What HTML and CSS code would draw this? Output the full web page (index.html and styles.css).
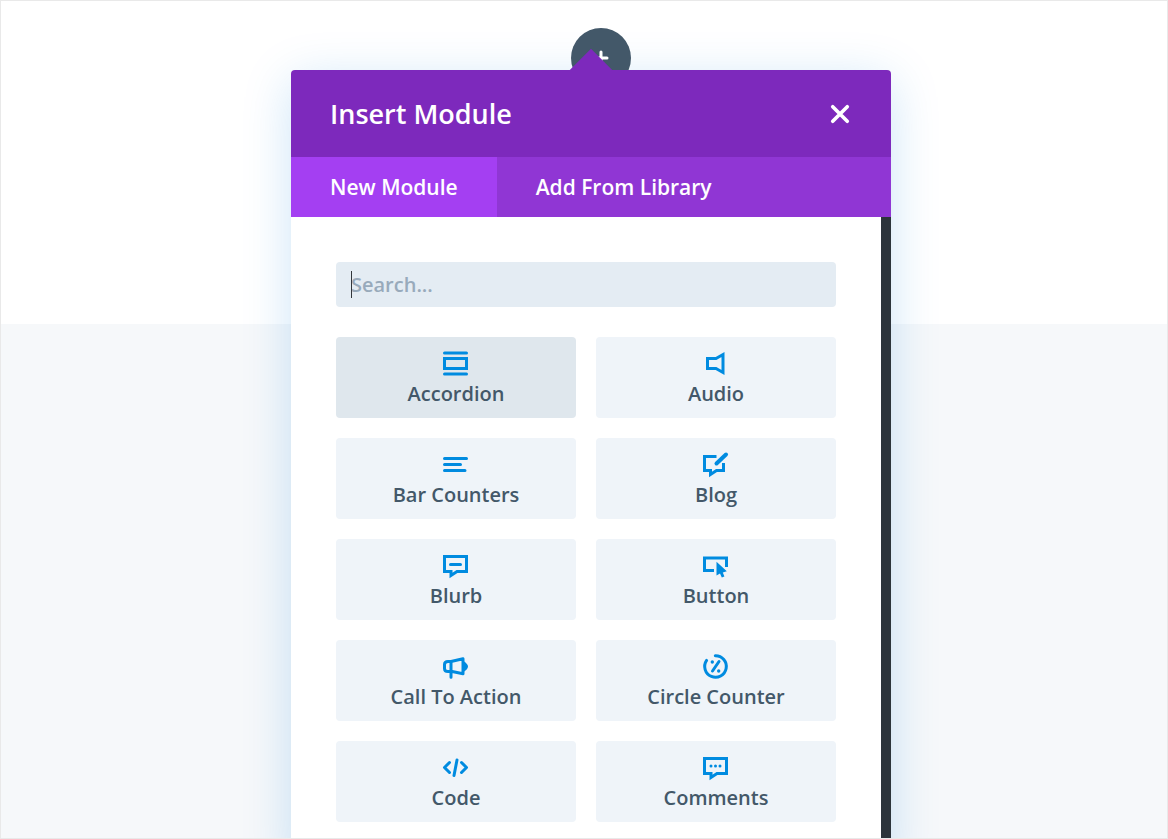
FILE: index.html
```html
<!DOCTYPE html>
<html lang="en">
<head>
    <meta charset="UTF-8">
    <meta name="viewport" content="width=device-width, initial-scale=1.0">
    <title>Insert Module</title>
    <link rel="stylesheet" href="styles.css">
</head>

<body>
<div class="page">
    <div class="modal">
        <button class="add-button" type="button" aria-label="Add module">
            <svg width="16" height="16" viewBox="0 0 16 16"><path d="M8 2v12M2 8h12"/></svg>
        </button>
        <span class="arrow"></span>

        <header class="modal-header">
            <h1>Insert Module</h1>
            <button class="close" type="button" aria-label="Close">
                <svg width="20" height="20" viewBox="0 0 22 22"><path d="M3 3l16 16M19 3L3 19"/></svg>
            </button>
        </header>

        <nav class="tabs">
            <button class="tab active" type="button">New Module</button>
            <button class="tab" type="button">Add From Library</button>
        </nav>

        <div class="modal-body">
            <div class="search">
                <input type="text" id="search" placeholder="Search..." aria-label="Search modules">
                <span class="caret"></span>
            </div>

            <div class="modules">
                <button class="module hover" type="button">
                    <svg class="icon" viewBox="0 0 28 28"><path d="M2.5 3h22M2.5 24h22" stroke-linecap="round"/><path d="M2.5 8.5h22v10h-22z"/></svg>
                    Accordion
                </button>
                <button class="module" type="button">
                    <svg class="icon" viewBox="0 0 28 28"><path d="M5.5 8.5h8.5l7-4v18l-7-4h-8.5z"/></svg>
                    Audio
                </button>
                <button class="module" type="button">
                    <svg class="icon round" viewBox="0 0 28 28"><path d="M2.5 7.5h22M2.5 13.5h16M2.5 19.5h20.5"/></svg>
                    Bar Counters
                </button>
                <button class="module" type="button">
                    <svg class="icon" viewBox="0 0 28 28"><path d="M14.5 5.5h-12v14h6v4l6-4h7v-7.5"/><path class="pen" d="M24 3.5L14.5 12.5"/></svg>
                    Blog
                </button>
                <button class="module" type="button">
                    <svg class="icon" viewBox="0 0 28 28"><path d="M2.5 4.5h22v15h-9.5l-6 4v-4h-6.5z"/><path d="M8.5 12.5h10" stroke-linecap="round"/></svg>
                    Blurb
                </button>
                <button class="module" type="button">
                    <svg class="icon" viewBox="0 0 28 28"><path d="M12 18.5h-9.5v-12.5h22v9"/><path class="solid" d="M14.5 9.8v13.7l3.5-1.9 1.8 4 2.6-1.100-1.6-3.900 4-1.300z"/></svg>
                    Button
                </button>
                <button class="module" type="button">
                    <svg class="icon round" viewBox="0 0 28 28"><path d="M9 8.5h-3q-3.5 0-3.5 3v4q0 3 3.5 3h3M9 8.5v15.7M9 8.5l12-2.7v15l-12-2.5"/><path class="solid" d="M21.5 8q4.5 3 4.5 5.500t-4.5 5.500z"/></svg>
                    Call To Action
                </button>
                <button class="module" type="button">
                    <svg class="icon round" viewBox="0 0 28 28"><path d="M13.3 2.7a10.8 10.8 0 1 1-8.7 4.7M17 8.5l-6.5 9.5"/><circle class="solid" cx="10.3" cy="9" r="1.7"/><circle class="solid" cx="16.7" cy="18" r="1.7"/></svg>
                    Circle Counter
                </button>
                <button class="module" type="button">
                    <svg class="icon round" viewBox="0 0 28 28"><path d="M7.5 8.5l-5 5 5 5M19.5 8.5l5 5-5 5M15 6l-3 15.5"/></svg>
                    Code
                </button>
                <button class="module" type="button">
                    <svg class="icon" viewBox="0 0 28 28"><path d="M2.5 4.5h22v15h-9.5l-6 4v-4h-6.5z"/><circle class="solid" cx="9" cy="12" r="1.5"/><circle class="solid" cx="13.5" cy="12" r="1.5"/><circle class="solid" cx="18" cy="12" r="1.5"/></svg>
                    Comments
                </button>
            </div>
        </div>
    </div>
</div>
</body>
</html>
```

FILE: styles.css
```css
* {
    box-sizing: border-box;
}
body {
    margin: 0;
    font-family: "Open Sans", sans-serif;
    font-weight: 600;
}
button {
    border: none;
    padding: 0;
    font: inherit;
    cursor: pointer;
}
svg {
    fill: none;
    stroke: currentColor;
    stroke-width: 3px;
}
.page {
    height: 100vh;
    overflow: hidden;
    border: 1px solid #e9e9e9;
    padding: 69px 0 0 14px;
    background: linear-gradient(#fff 323px, #f6f8fa 323px);
}

/* modal */
.modal {
    position: relative;
    width: 600px;
    max-width: 100%;
    min-height: 100%;
    margin: 0 auto;
    border-radius: 4px;
    background-color: #fff;
    box-shadow: 0 10px 50px rgba(0, 125, 220, 0.2);
}
.add-button {
    position: absolute;
    top: -42px;
    left: 280px;
    display: flex;
    align-items: center;
    justify-content: center;
    width: 60px;
    height: 60px;
    border-radius: 50%;
    background-color: #435869;
    color: #fff;
}
.add-button svg {
    stroke-linecap: round;
}
.arrow {
    position: absolute;
    top: -15px;
    left: 285px;
    width: 30px;
    height: 30px;
    background-color: #7d29bc;
    transform: rotate(45deg);
}
.modal-header {
    position: relative;
    display: flex;
    align-items: center;
    justify-content: space-between;
    height: 87px;
    padding: 0 41px 0 39px;
    border-radius: 4px 4px 0 0;
    background-color: #7d29bc;
    color: #fff;
}
.modal-header h1 {
    margin: 0;
    font-size: 27px;
    font-weight: 600;
}
.close {
    display: flex;
    background: none;
    color: #fff;
}
.close svg {
    stroke-width: 4px;
    stroke-linecap: round;
}
.tabs {
    display: flex;
    background-color: #9036d4;
}
.tab {
    height: 60px;
    padding: 0 39px;
    background: none;
    color: #fff;
    font-size: 21px;
}
.tab.active {
    background-color: #a43ff2;
}
.modal-body {
    padding: 45px;
    border-right: 10px solid #2c343b;
}

/* search */
.search {
    position: relative;
    margin-bottom: 30px;
}
.search input {
    display: block;
    width: 100%;
    height: 45px;
    padding: 0 15px;
    border: none;
    border-radius: 4px;
    background-color: #e4ecf3;
    color: #435869;
    font: inherit;
    font-size: 20px;
    outline: none;
}
.search input::placeholder {
    color: #98aabb;
    opacity: 1;
}
.caret {
    position: absolute;
    top: 9px;
    left: 15px;
    width: 1px;
    height: 27px;
    background-color: #32373c;
}

/* module list */
.modules {
    display: grid;
    grid-template-columns: 1fr 1fr;
    gap: 20px;
}
.module {
    display: flex;
    flex-direction: column;
    align-items: center;
    height: 81px;
    padding-top: 13px;
    border-radius: 4px;
    background-color: #eff4f9;
    color: #435869;
    font-size: 20px;
    line-height: 32px;
}
.module.hover {
    background-color: #dfe7ed;
}
.icon {
    flex: none;
    width: 28px;
    height: 28px;
    color: #008be0;
}
.icon.round {
    stroke-linecap: round;
    stroke-linejoin: round;
}
.icon .pen {
    stroke-width: 4px;
    stroke-linecap: round;
}
.icon .solid {
    fill: currentColor;
    stroke: none;
}
```
